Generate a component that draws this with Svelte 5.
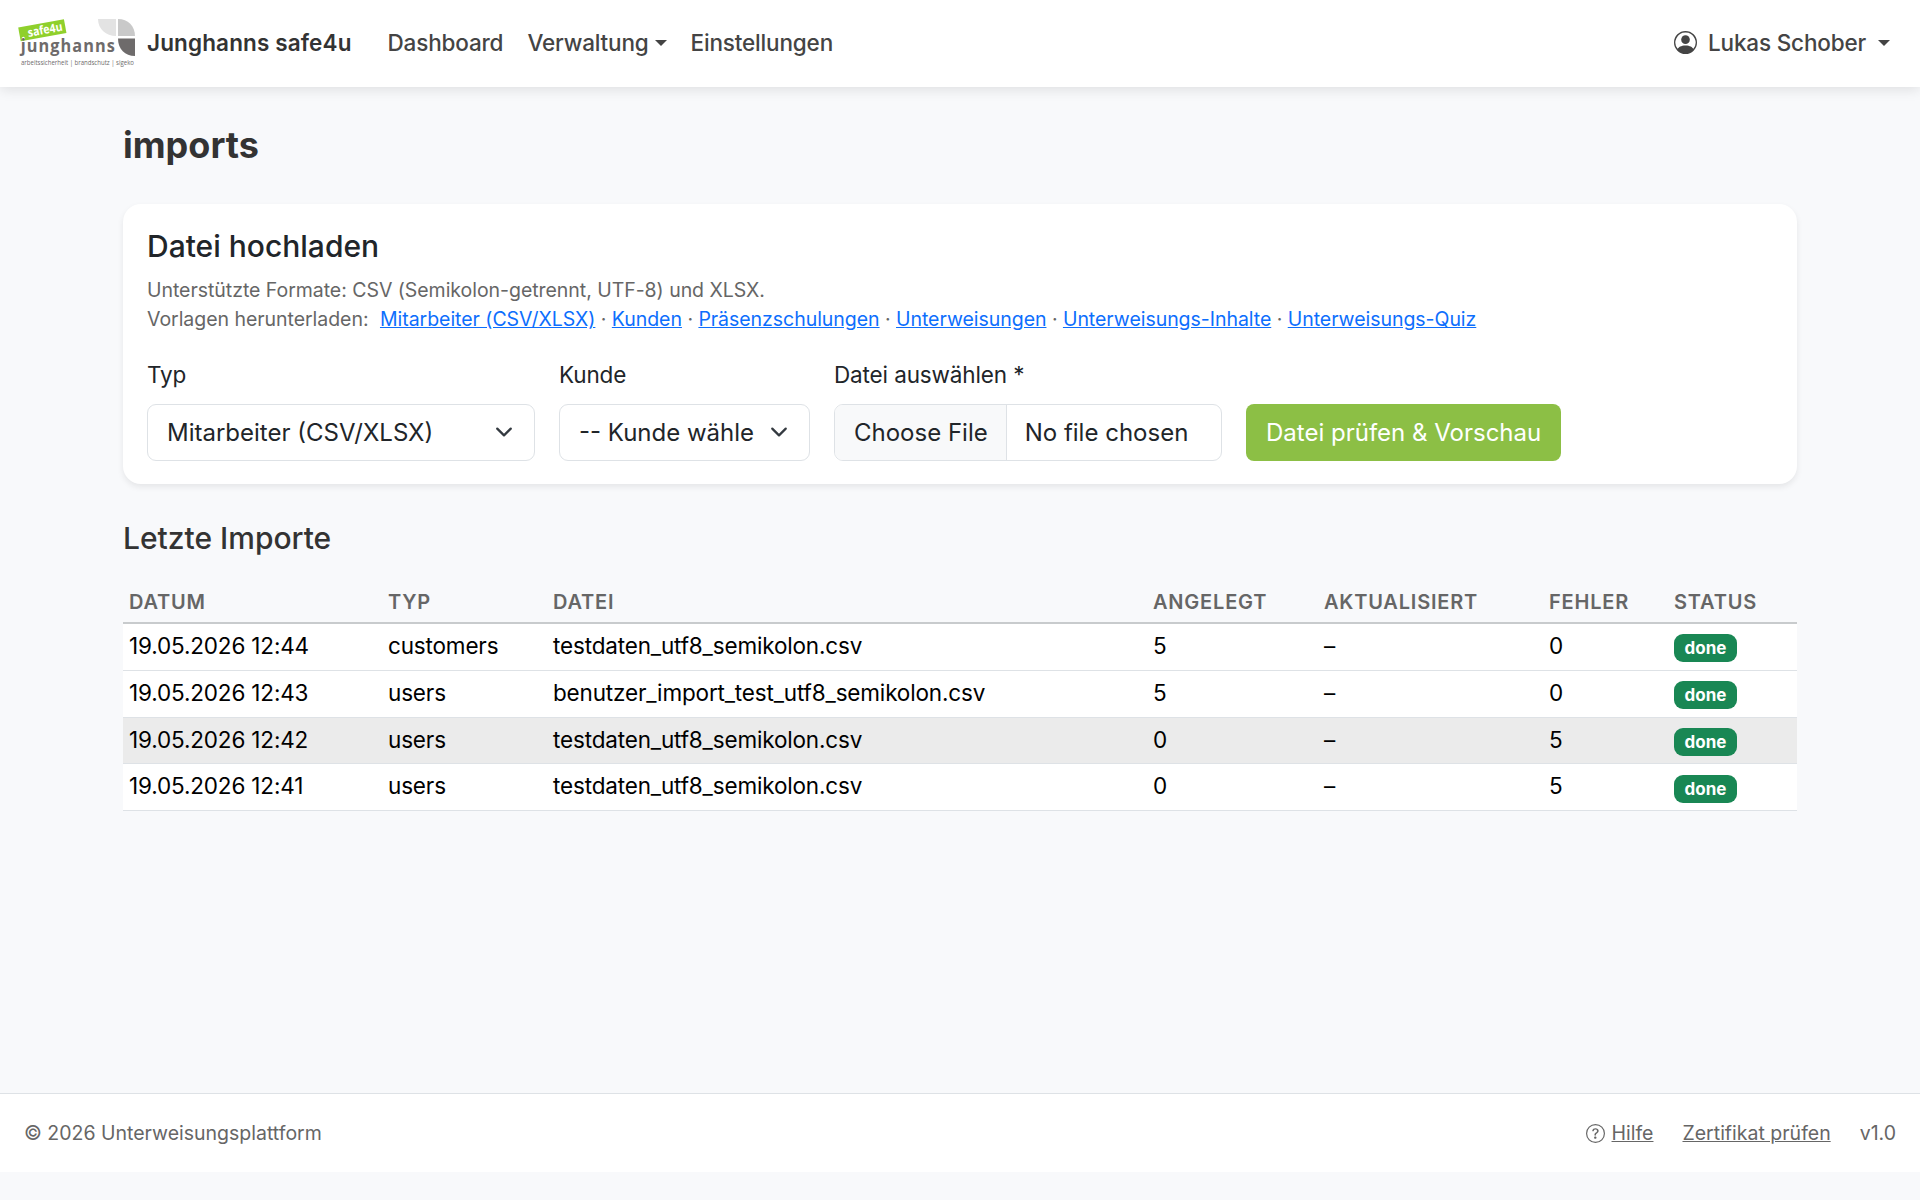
<script lang="ts">
    type ImportRow = {
        date: string;
        type: string;
        file: string;
        created: number;
        updated: string;
        errors: number;
        status: string;
    };

    let selectedType = 'users';
    let selectedCustomer = '';
    let fileName = '';

    const templates = [
        'Mitarbeiter (CSV/XLSX)',
        'Kunden',
        'Präsenzschulungen',
        'Unterweisungen',
        'Unterweisungs-Inhalte',
        'Unterweisungs-Quiz'
    ];

    const imports: ImportRow[] = [
        { date: '19.05.2026 12:44', type: 'customers', file: 'testdaten_utf8_semikolon.csv', created: 5, updated: '–', errors: 0, status: 'done' },
        { date: '19.05.2026 12:43', type: 'users', file: 'benutzer_import_test_utf8_semikolon.csv', created: 5, updated: '–', errors: 0, status: 'done' },
        { date: '19.05.2026 12:42', type: 'users', file: 'testdaten_utf8_semikolon.csv', created: 0, updated: '–', errors: 5, status: 'done' },
        { date: '19.05.2026 12:41', type: 'users', file: 'testdaten_utf8_semikolon.csv', created: 0, updated: '–', errors: 5, status: 'done' }
    ];

    // Row that is currently highlighted
    let activeRow = 2;

    function handleFile(event: Event) {
        const input = event.target as HTMLInputElement;
        fileName = input.files?.[0]?.name ?? '';
    }
</script>

<div class="page">
    <nav class="navbar">
        <a class="brand" href="#home">
            <svg class="logo" width="120" height="56" viewBox="0 0 120 56">
                <g transform="translate(0.2 12.6) rotate(-10.4)">
                    <rect width="46.500" height="14" fill="#8fd02c" />
                    <text x="8.5" y="11" textLength="35" lengthAdjust="spacingAndGlyphs" class="logo-tag">safe4u</text>
                    <circle cx="3" cy="11.500" r="1.5" fill="#fff" />
                </g>
                <g transform="scale(0.88 1)">
                    <text x="3" y="37.500" textLength="107" lengthAdjust="spacing" class="logo-name">junghanns</text>
                </g>
                <text x="3" y="49.500" textLength="113" lengthAdjust="spacingAndGlyphs" class="logo-line">arbeitssicherheit | brandschutz | sigeko</text>
                <path d="M80 4h18v17c-10 0-18-7-18-17z" fill="#e3e3e3" />
                <path d="M100 4c10 0 17 7 17 17h-17z" fill="#c9c9c9" />
                <path d="M100 23.500h17v17.500c-10 0-17-7-17-17.500z" fill="#6e6b6b" />
            </svg>
            <span>Junghanns safe4u</span>
        </a>
        <div class="nav-links">
            <a href="#dashboard">Dashboard</a>
            <a href="#verwaltung">Verwaltung<i class="caret"></i></a>
            <a href="#einstellungen">Einstellungen</a>
        </div>
        <a class="user" href="#profil">
            <svg width="23" height="23" viewBox="0 0 16 16" fill="currentColor">
                <path d="M11 6a3 3 0 1 1-6 0 3 3 0 0 1 6 0" />
                <path fill-rule="evenodd" d="M0 8a8 8 0 1 1 16 0A8 8 0 0 1 0 8m8-7a7 7 0 0 0-5.468 11.370C3.242 11.226 4.805 10 8 10s4.757 1.225 5.468 2.370A7 7 0 0 0 8 1" />
            </svg>
            <span>Lukas Schober</span>
            <i class="caret"></i>
        </a>
    </nav>

    <main>
        <h1>imports</h1>

        <section class="card">
            <h2>Datei hochladen</h2>
            <p class="hint">Unterstützte Formate: CSV (Semikolon-getrennt, UTF-8) und XLSX.</p>
            <p class="hint">
                <span class="hint-label">Vorlagen herunterladen:</span>
                {#each templates as template, i}{#if i > 0}{' · '}{/if}<a href="#vorlage-{i}">{template}</a>{/each}
            </p>

            <form on:submit|preventDefault>
                <div class="field wide">
                    <label for="type">Typ</label>
                    <div class="select">
                        <select id="type" bind:value={selectedType}>
                            <option value="users">Mitarbeiter (CSV/XLSX)</option>
                        </select>
                        <svg class="chevron" width="18" height="18" viewBox="0 0 16 16">
                            <path d="m2 5 6 6 6-6" />
                        </svg>
                    </div>
                </div>
                <div class="field narrow">
                    <label for="customer">Kunde</label>
                    <div class="select">
                        <select id="customer" bind:value={selectedCustomer}>
                            <option value="">-- Kunde wählen --</option>
                        </select>
                        <svg class="chevron" width="18" height="18" viewBox="0 0 16 16">
                            <path d="m2 5 6 6 6-6" />
                        </svg>
                    </div>
                </div>
                <div class="field wide">
                    <label for="file">Datei auswählen *</label>
                    <label class="file" for="file">
                        <span class="file-button">Choose File</span>
                        <span class="file-name">{fileName || 'No file chosen'}</span>
                    </label>
                    <input id="file" type="file" accept=".csv,.xlsx" hidden on:change={handleFile} />
                </div>
                <button type="submit">Datei prüfen &amp; Vorschau</button>
            </form>
        </section>

        <h2 class="table-title">Letzte Importe</h2>
        <table>
            <colgroup>
                <col style="width: 259px" />
                <col style="width: 165px" />
                <col style="width: 600px" />
                <col style="width: 171px" />
                <col style="width: 225px" />
                <col style="width: 125px" />
                <col />
            </colgroup>
            <thead>
                <tr>
                    <th>Datum</th>
                    <th>Typ</th>
                    <th>Datei</th>
                    <th>Angelegt</th>
                    <th>Aktualisiert</th>
                    <th>Fehler</th>
                    <th>Status</th>
                </tr>
            </thead>
            <tbody>
                {#each imports as row, i}
                    <tr class:active={i === activeRow}>
                        <td>{row.date}</td>
                        <td>{row.type}</td>
                        <td>{row.file}</td>
                        <td>{row.created}</td>
                        <td>{row.updated}</td>
                        <td>{row.errors}</td>
                        <td><span class="badge">{row.status}</span></td>
                    </tr>
                {/each}
            </tbody>
        </table>
    </main>

    <footer>
        <span>© 2026 Unterweisungsplattform</span>
        <div class="footer-links">
            <span class="help">
                <svg width="19" height="19" viewBox="0 0 16 16" fill="currentColor">
                    <path d="M8 15A7 7 0 1 1 8 1a7 7 0 0 1 0 14m0 1A8 8 0 1 0 8 0a8 8 0 0 0 0 16" />
                    <path d="M5.255 5.786a.237.237 0 0 0 .241.247h.825c.138 0 .248-.113.266-.25.090-.656.540-1.134 1.342-1.134.686 0 1.314.343 1.314 1.168 0 .635-.374.927-.965 1.371-.673.489-1.206 1.060-1.168 1.987l.003.217a.25.25 0 0 0 .25.246h.811a.25.25 0 0 0 .25-.25v-.105c0-.718.273-.927 1.010-1.486.609-.463 1.244-.977 1.244-2.056 0-1.511-1.276-2.241-2.673-2.241-1.267 0-2.655.590-2.750 2.286m1.557 5.763c0 .533.425.927 1.010.927.609 0 1.028-.394 1.028-.927 0-.552-.420-.940-1.029-.940-.584 0-1.009.388-1.009.940" />
                </svg>
                <a href="#hilfe">Hilfe</a>
            </span>
            <a href="#zertifikat">Zertifikat prüfen</a>
            <span>v1.0</span>
        </div>
    </footer>
</div>

<style>
    :global(body) {
        background: #f8f9fb;
    }

    .page,
    .page * {
        box-sizing: border-box;
    }

    .page {
        display: flex;
        flex-direction: column;
        height: 1172px;
        font-family: Inter, sans-serif;
        font-size: 22.5px;
        line-height: 1.5;
        color: #212529;
    }

    .navbar {
        display: flex;
        align-items: center;
        height: 87px;
        padding: 0 30px 2px 18px;
        background: #fff;
        box-shadow: 0 3px 12px rgba(0, 0, 0, 0.1);
    }

    .navbar a {
        color: #444;
        text-decoration: none;
        font-weight: 500;
        letter-spacing: -0.17px;
    }

    .navbar .brand {
        display: flex;
        align-items: center;
        gap: 9px;
        color: #333;
        font-weight: 600;
        letter-spacing: 0.13px;
    }

    .logo {
        overflow: visible;
        letter-spacing: 0;
    }

    .logo-tag {
        font: bold 12px 'Open Sans', sans-serif;
        fill: #fff;
    }

    .logo-name {
        font: bold 18.5px 'Open Sans', sans-serif;
        fill: #6e6b6b;
    }

    .logo-line {
        font: 6.5px 'Open Sans', sans-serif;
        fill: #6e6b6b;
    }

    .nav-links {
        display: flex;
        gap: 24px;
        margin-left: 36px;
    }

    .caret {
        display: inline-block;
        border: 6px solid transparent;
        border-top-color: currentColor;
        border-bottom: 0;
        margin-left: 6px;
        vertical-align: 5px;
    }

    .user {
        display: flex;
        align-items: center;
        margin-left: auto;
    }

    .user span {
        margin: 0 6px 0 11px;
    }

    main {
        flex: 1;
        width: 1674px;
        margin: 0 auto;
    }

    h1 {
        margin: 37px 0;
        font-size: 36px;
        line-height: 43px;
        font-weight: 700;
        color: #333;
    }

    .card {
        height: 280px;
        padding: 24px;
        background: #fff;
        border-radius: 18px;
        box-shadow: 0 3px 6px rgba(0, 0, 0, 0.08);
    }

    h2 {
        margin: 0;
        font-size: 30px;
        line-height: 36px;
        font-weight: 500;
    }

    .hint {
        margin: 0;
        font-size: 19.5px;
        line-height: 29px;
        letter-spacing: -0.04px;
        color: #666;
    }

    h2 + .hint {
        margin-top: 12px;
    }

    .hint-label {
        margin-right: 6px;
    }

    .hint a {
        color: #0d6efd;
    }

    form {
        display: flex;
        align-items: flex-end;
        gap: 24px;
        margin-top: 24px;
    }

    .field {
        display: flex;
        flex-direction: column;
        gap: 12px;
        letter-spacing: -0.13px;
    }

    .wide {
        width: 388px;
    }

    .narrow {
        width: 251px;
    }

    .select {
        position: relative;
    }

    select {
        display: block;
        appearance: none;
        width: 100%;
        height: 57px;
        padding: 0 55px 0 19px;
        border: 1px solid #dee2e6;
        border-radius: 9px;
        background: #fff;
        color: #212529;
        font: 24px Inter, sans-serif;
        letter-spacing: 0;
    }

    .chevron {
        position: absolute;
        right: 22px;
        top: 19px;
        fill: none;
        stroke: #343a40;
        stroke-width: 2;
        stroke-linecap: round;
        stroke-linejoin: round;
    }

    .file {
        display: flex;
        height: 57px;
        border: 1px solid #dee2e6;
        border-radius: 9px;
        overflow: hidden;
        font-size: 24px;
        line-height: 55px;
        letter-spacing: 0;
    }

    .file-button {
        padding: 0 18px 0 19px;
        background: #f8f9fa;
        border-right: 1px solid #dee2e6;
    }

    .file-name {
        padding-left: 18px;
    }

    button {
        height: 57px;
        padding: 0 20px;
        border: 0;
        border-radius: 8px;
        background: #8cbf45;
        color: #fff;
        font: 24px Inter, sans-serif;
        cursor: pointer;
    }

    .table-title {
        margin: 36px 0 12px;
        color: #333;
    }

    table {
        width: 100%;
        table-layout: fixed;
        border-collapse: separate;
        border-spacing: 0;
        color: #000;
        letter-spacing: -0.16px;
    }

    th {
        height: 56px;
        padding: 13px 6px 0;
        border-bottom: 2px solid #c8cbcd;
        text-align: left;
        text-transform: uppercase;
        font-size: 20px;
        font-weight: 600;
        letter-spacing: 0.8px;
        color: #666;
    }

    td {
        height: 46.75px;
        padding: 0 6px 2px;
        background: #fff;
        border-bottom: 1px solid #dee2e6;
    }

    .active td {
        background: #ebebeb;
    }

    .badge {
        display: block;
        width: 63px;
        height: 28px;
        margin-top: 5px;
        border-radius: 9px;
        background: #198754;
        color: #fff;
        font-size: 17px;
        line-height: 28px;
        font-weight: 700;
        letter-spacing: 0;
        text-align: center;
    }

    footer {
        display: flex;
        align-items: center;
        justify-content: space-between;
        height: 79px;
        padding: 2px 24px 0;
        background: #fff;
        border-top: 1px solid #dee2e6;
        font-size: 19.5px;
        color: #666;
    }

    .footer-links {
        display: flex;
        gap: 29px;
    }

    .help {
        display: flex;
        align-items: center;
        gap: 7px;
    }

    .help svg {
        margin-top: -1px;
    }

    footer a {
        color: #666;
    }
</style>
